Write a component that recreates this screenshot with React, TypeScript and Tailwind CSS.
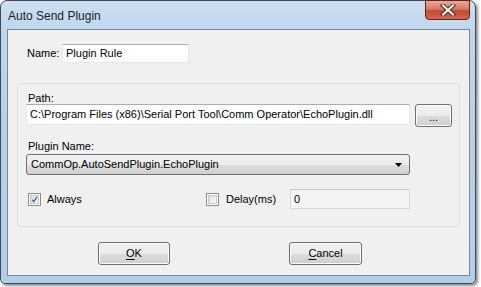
import React from "react";

const font = { fontFamily: '"Liberation Sans", Arial, sans-serif' };

function TextBox({ value, className = "" }: { value: string; className?: string }) {
  return (
    <div
      className={`flex items-center bg-white border border-[#e3e9ef] border-t-[#abadb3] pl-[3px] text-[11px] text-black ${className}`}
    >
      {value}
    </div>
  );
}

function Checkbox({ checked }: { checked?: boolean }) {
  return (
    <div className="w-[13px] h-[13px] border border-[#8e8f8f] bg-white p-[1px]">
      <div className="w-full h-full border border-[#c8c9ca] bg-gradient-to-br from-[#dcdcdc] to-[#fafafa] flex items-center justify-center">
        {checked && (
          <svg width="9" height="9" viewBox="0 0 9 9">
            <path d="M1.2 4.6 L3.6 7.2 L7.8 1.2" fill="none" stroke="#4d6185" strokeWidth="1.7" />
          </svg>
        )}
      </div>
    </div>
  );
}

function Button({ children, className = "" }: { children: React.ReactNode; className?: string }) {
  return (
    <div
      className={`flex items-center justify-center rounded-[3px] border border-[#707070] text-[11px] text-black ${className}`}
      style={{
        background: "linear-gradient(#f2f2f2 0%, #ebebeb 50%, #dddddd 51%, #cfcfcf 100%)",
        boxShadow: "inset 0 0 0 1px #fcfcfc",
      }}
    >
      {children}
    </div>
  );
}

export default function App() {
  return (
    <div className="w-[481px] h-[287px] bg-white overflow-hidden" style={font}>
      <div
        className="w-[476px] h-[284px] rounded-t-[7px] rounded-b-[5px] border border-[#3f4a57] flex flex-col shadow-[2px_2px_3px_rgba(0,0,0,0.45)]"
        style={{ background: "linear-gradient(#cddff2 0%, #bdd5ee 12%, #b9d1ea 40%, #b4cde9 100%)" }}
      >
        <div className="h-[28px] flex items-start justify-between">
          <div className="pl-[7px] pt-[6px] text-[12px] text-[#1e1e1e]">Auto Send Plugin</div>
          <div
            className="mr-[5px] mt-[-1px] w-[45px] h-[20px] rounded-b-[4px] border border-[#5e2319] flex items-center justify-center"
            style={{ background: "linear-gradient(#e9a99a 0%, #d67966 45%, #c64930 55%, #cf6a4c 100%)" }}
          >
            <svg width="16" height="12" viewBox="0 0 16 12">
              <path d="M3 1.5 L13 10.5 M13 1.5 L3 10.5" stroke="#4a2a26" strokeWidth="4.2" strokeLinecap="square" />
              <path d="M3 1.5 L13 10.5 M13 1.5 L3 10.5" stroke="#ffffff" strokeWidth="2.2" strokeLinecap="square" />
            </svg>
          </div>
        </div>
        <div className="ml-[6px] mr-[5px] mb-[7px] flex-1 border border-[#7a8896] bg-[#f0f0f0] flex flex-col">
          <div className="mt-[14px] ml-[19px] flex items-center">
            <div className="w-[35px] text-[11px] text-black">Name:</div>
            <TextBox value="Plugin Rule" className="w-[127px] h-[19px]" />
          </div>
          <div className="mt-[20px] ml-[9px] w-[443px] h-[144px] rounded-[3px] border border-[#d5dfe5] flex flex-col pl-[8px]">
            <div className="mt-[8px] h-[13px] leading-[13px] pl-[2px] text-[11px] text-black">Path:</div>
            <div className="mt-[-1px] flex items-start">
              <TextBox value="C:\Program Files (x86)\Serial Port Tool\Comm Operator\EchoPlugin.dll" className="w-[384px] h-[21px]" />
              <Button className="ml-[5px] w-[37px] h-[23px] items-start pt-[4px]">...</Button>
            </div>
            <div className="mt-[13px] h-[13px] leading-[13px] pl-[2px] text-[11px] text-black">Plugin Name:</div>
            <div
              className="mt-[1px] w-[384px] h-[21px] rounded-[3px] border border-[#707070] flex items-center justify-between pl-[4px] pr-[7px] text-[11px] text-black"
              style={{ background: "linear-gradient(#f2f2f2 0%, #ebebeb 50%, #dddddd 51%, #cfcfcf 100%)" }}
            >
              <span>CommOp.AutoSendPlugin.EchoPlugin</span>
              <svg width="7" height="4" viewBox="0 0 7 4">
                <path d="M0 0 L7 0 L3.5 4 Z" fill="#000" />
              </svg>
            </div>
            <div className="mt-[14px] flex items-center">
              <div className="ml-[2px] w-[178px] flex items-center">
                <Checkbox checked />
                <span className="ml-[6px] text-[11px] text-black">Always</span>
              </div>
              <Checkbox />
              <span className="ml-[7px] w-[64px] text-[11px] text-black">Delay(ms)</span>
              <div className="w-[120px] h-[20px] border border-[#dadada] border-t-[#c6c6c6] bg-[#f4f4f4] flex items-center pl-[3px] text-[11px] text-black">
                0
              </div>
            </div>
          </div>
          <div className="mt-[15px] flex">
            <Button className="ml-[90px] w-[72px] h-[23px]">
              <span className="underline underline-offset-2">O</span>K
            </Button>
            <Button className="ml-[119px] w-[73px] h-[23px]">
              <span className="underline underline-offset-2">C</span>ancel
            </Button>
          </div>
        </div>
      </div>
    </div>
  );
}
